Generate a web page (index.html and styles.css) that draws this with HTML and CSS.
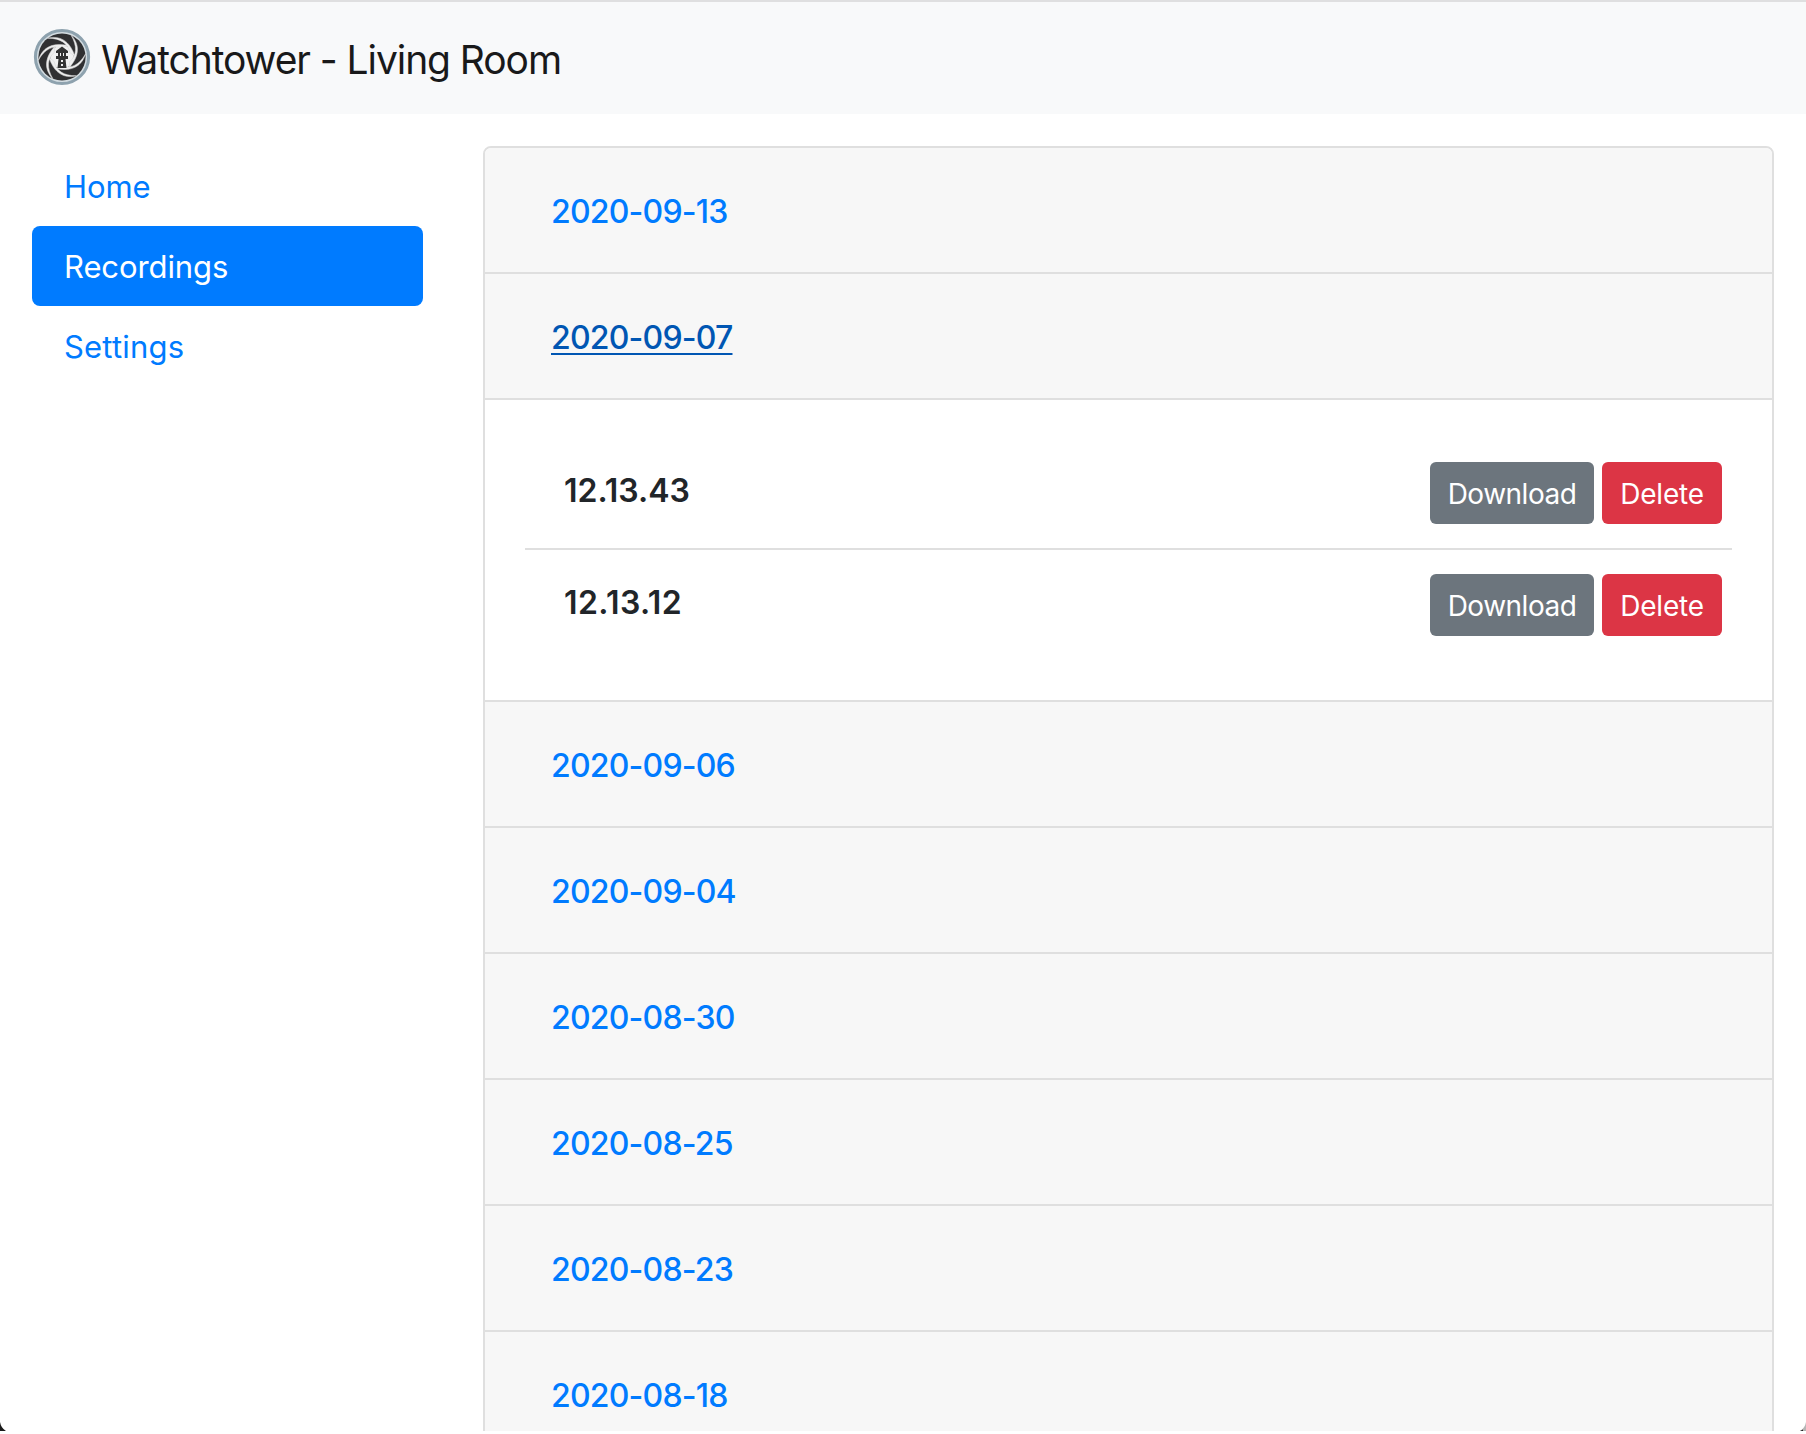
FILE: index.html
```html
<!DOCTYPE html>
<html lang="en">
<head>
<meta charset="utf-8">
<title>Watchtower - Living Room</title>
<link rel="stylesheet" href="styles.css">
</head>
<body>
<header class="navbar">
  <svg class="logo" viewBox="0 0 58 58" aria-hidden="true">
    <circle cx="29" cy="29" r="26.6" fill="#d3dce1" stroke="#8ea2ae" stroke-width="3"/>
    <circle cx="29" cy="29" r="23.6" fill="#303032"/>
    <circle cx="29" cy="29" r="11.8" fill="#f1f1f1"/>
    <defs>
      <path id="edge" d="M5.500 32C9 20.500 18 14 35 17.500L29 20C20 17 12 21 5.500 32Z" fill="#efefef" stroke="#d8d8d8" stroke-width=".5"/>
    </defs>
    <use href="#edge"/>
    <use href="#edge" transform="rotate(60 29 29)"/>
    <use href="#edge" transform="rotate(120 29 29)"/>
    <use href="#edge" transform="rotate(180 29 29)"/>
    <use href="#edge" transform="rotate(240 29 29)"/>
    <use href="#edge" transform="rotate(300 29 29)"/>
    <path d="M29 18.500L35 23V25H23V23ZM25 25H27V28H25ZM31 25H33V28H31ZM28 25H30V28H28ZM23 28H35V31H32.500L33.500 40H24.500L25.500 31H23ZM28 32V34H30V32ZM28 36V38H30V36Z" fill="#333" fill-rule="evenodd"/>
  </svg>
  <span class="brand">Watchtower - Living Room</span>
</header>
<div class="layout">
  <nav class="sidebar">
    <a class="nav-link">Home</a>
    <a class="nav-link active">Recordings</a>
    <a class="nav-link wide">Settings</a>
  </nav>
  <main class="accordion">
    <section class="card"><h2 class="card-header"><a>2020-09-13</a></h2></section>
    <section class="card">
      <h2 class="card-header"><a class="hovered">2020-09-07</a></h2>
      <div class="card-body">
        <div class="recording">
          <span class="time">12.13.43</span>
          <div class="actions"><button class="btn download">Download</button><button class="btn delete">Delete</button></div>
        </div>
        <div class="recording">
          <span class="time wide">12.13.12</span>
          <div class="actions"><button class="btn download">Download</button><button class="btn delete">Delete</button></div>
        </div>
      </div>
    </section>
    <section class="card"><h2 class="card-header"><a>2020-09-06</a></h2></section>
    <section class="card"><h2 class="card-header"><a>2020-09-04</a></h2></section>
    <section class="card"><h2 class="card-header"><a>2020-08-30</a></h2></section>
    <section class="card"><h2 class="card-header"><a>2020-08-25</a></h2></section>
    <section class="card"><h2 class="card-header"><a>2020-08-23</a></h2></section>
    <section class="card"><h2 class="card-header"><a>2020-08-18</a></h2></section>
  </main>
</div>
<svg class="corner corner-left" viewBox="0 0 6 9" aria-hidden="true"><path d="M0 0Q1 6 6 9H0Z" fill="#1a1a1a"/></svg>
<svg class="corner corner-right" viewBox="0 0 6 9" aria-hidden="true"><path d="M6 0Q5 6 0 9H6Z" fill="#b5b5b5"/><path d="M3 7.500L0 9H3Z" fill="#222"/></svg>
</body>
</html>
```
FILE: styles.css
```css
* { box-sizing: border-box; }
html { background: #fff; }
body {
  margin: 0;
  position: relative;
  height: 1431px;
  overflow: hidden;
  display: flex;
  flex-direction: column;
  color: #212529;
  font-family: Inter, "Liberation Sans", sans-serif;
  font-size: 32px;
}
.navbar {
  flex: none;
  height: 114px;
  border-top: 2px solid #dfdfe0;
  background: #f8f9fa;
  display: flex;
  align-items: center;
  padding: 0 32px 0 33px;
  gap: 10px;
}
.logo { width: 58px; height: 58px; margin-bottom: 2px; }
.brand { font-size: 39px; font-weight: 440; letter-spacing: -1.08px; line-height: 60px; padding-top: 3px; color: #19191a; }
.layout {
  flex: 1;
  min-height: 0;
  overflow: hidden;
  display: flex;
  align-items: flex-start;
  padding: 32px 32px 0;
}
.sidebar { width: 391px; margin-right: 60px; flex: none; }
.nav-link {
  display: flex;
  align-items: center;
  height: 80px;
  padding: 0 32px;
  border-radius: 8px;
  color: #007bff;
  font-size: 31px;
  font-weight: 440;
  letter-spacing: -0.1px;
}
.nav-link.wide { letter-spacing: 0.2px; }
.nav-link.active { background: #007bff; color: #fff; }
.accordion {
  flex: 1;
  border: 2px solid #dfdfdf;
  border-radius: 8px 8px 0 0;
  overflow: hidden;
}
.card-header {
  margin: 0;
  height: 126px;
  padding: 2px 66px 0;
  display: flex;
  align-items: center;
  background: #f7f7f7;
  border-bottom: 2px solid #dfdfdf;
  font-size: 32px;
  font-weight: 500;
  color: #007bff;
}
.card-header a { letter-spacing: -0.8px; }
.hovered { color: #0056b3; text-decoration: underline; text-decoration-thickness: 2px; text-underline-offset: 4px; }
.card-body { padding: 40px; height: 302px; border-bottom: 2px solid #dfdfdf; }
.recording {
  display: flex;
  align-items: flex-start;
  justify-content: space-between;
  height: 108px;
  padding: 22px 10px 0 39px;
}
.recording + .recording { border-top: 2px solid #dfdfdf; padding-top: 24px; }
.time { font-weight: 580; line-height: 57px; font-size: 32px; }
.time.wide { letter-spacing: 0.4px; }
.actions { display: flex; gap: 8px; }
.btn {
  height: 62px;
  border: 0;
  border-radius: 6px;
  padding: 2px 0 0;
  color: #fff;
  font: 440 28px Inter, "Liberation Sans", sans-serif;
  letter-spacing: -0.5px;
}
.download { width: 164px; background: #6c757d; }
.delete { width: 120px; background: #dc3545; letter-spacing: -0.2px; }
.corner { position: absolute; bottom: 0; width: 6px; height: 9px; }
.corner-left { left: 0; }
.corner-right { right: 0; }
```
